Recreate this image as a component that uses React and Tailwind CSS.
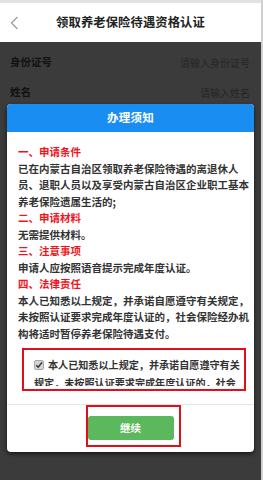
import React from "react";

const font = { fontFamily: '"Noto Sans CJK SC", "Noto Sans", sans-serif' };

function Line({ children, red }) {
  return (
    <div className={`whitespace-nowrap ${red ? "text-[#f0141e]" : "text-[#333333]"}`}>{children}</div>
  );
}

export default function App() {
  return (
    <div className="flex w-[263px] h-[480px] overflow-hidden bg-white" style={font}>
      <div className="relative w-[261px] h-[480px] flex flex-col bg-[#3b3b3b]">
        <div className="h-[3px] bg-[#e2e2e2]" />
        <div className="relative h-[39px] bg-white flex items-center justify-center">
          <svg className="absolute left-[10px] top-[13px]" width="9" height="14" viewBox="0 0 9 14">
            <polyline points="7.5,1 1.5,7 7.5,13" fill="none" stroke="#9a9a9a" strokeWidth="1.2" />
          </svg>
          <span className="text-[12.3px] font-bold text-[#222] tracking-[0.1px]">领取养老保险待遇资格认证</span>
        </div>
        <div className="pt-[5px] flex flex-col">
          <div className="h-[30px] flex items-center justify-between pl-[10px] pr-[11px]">
            <span className="text-[10.5px] font-bold text-[#111111]">身份证号</span>
            <span className="text-[10px] text-[#252525]">请输入身份证号</span>
          </div>
          <div className="h-[30px] flex items-center justify-between pl-[10px] pr-[11px]">
            <span className="text-[10.5px] font-bold text-[#111111]">姓名</span>
            <span className="text-[10px] text-[#252525]">请输入姓名</span>
          </div>
        </div>

        <div className="absolute left-[7px] top-[104px] w-[247px] bg-white rounded-[4px] shadow-[0_2px_4px_rgba(0,0,0,0.6)] flex flex-col">
          <div className="h-[28px] bg-[#1a8df2] rounded-t-[4px] flex items-center justify-center">
            <span className="text-white text-[11.5px] font-bold tracking-[0.3px]">办理须知</span>
          </div>
          <div className="pt-[12px] pl-[11px] pr-[6px] text-[10.5px] leading-[16.5px] font-bold">
            <Line red>一、申请条件</Line>
            <Line>已在内蒙古自治区领取养老保险待遇的离退休人</Line>
            <Line>员、退职人员以及享受内蒙古自治区企业职工基本</Line>
            <Line>养老保险遗属生活的;</Line>
            <Line red>二、申请材料</Line>
            <Line>无需提供材料。</Line>
            <Line red>三、注意事项</Line>
            <Line>申请人应按照语音提示完成年度认证。</Line>
            <Line red>四、法律责任</Line>
            <Line>本人已知悉以上规定，并承诺自愿遵守有关规定，</Line>
            <Line>未按照认证要求完成年度认证的，社会保险经办机</Line>
            <Line>构将适时暂停养老保险待遇支付。</Line>
          </div>
          <div className="mt-[6px] ml-[15px] mr-[8px] h-[43px] border-2 border-[#e0101a] pt-[6px] pl-[10px] pr-[1px]">
            <div className="h-[30px] overflow-hidden text-[10.1px] leading-[18px] font-bold text-[#333]">
              <div className="whitespace-nowrap flex items-center">
                <svg className="mr-[4px] shrink-0" width="10" height="10" viewBox="0 0 10 10">
                  <rect x="0.5" y="0.5" width="9" height="9" rx="1.5" fill="#d4d4d4" stroke="#a8a8a8" />
                  <polyline points="2.2,5.2 4.2,7.2 8,2.4" fill="none" stroke="#333" strokeWidth="1.5" />
                </svg>
                <span>本人已知悉以上规定，并承诺自愿遵守有关</span>
              </div>
              <div className="whitespace-nowrap">规定，未按照认证要求完成年度认证的，社会</div>
            </div>
          </div>
          <div className="mt-[13px] h-px bg-[#e6e6e6]" />
          <div className="flex justify-center pt-[11px] pb-[12px]">
            <div className="relative">
              <button className="w-[86px] h-[24px] rounded-[3px] bg-[#5cb85c] text-white text-[10.5px] font-bold flex items-center justify-center">
                继续
              </button>
              <div className="absolute -left-[2px] -right-[7px] -top-[11px] -bottom-[7px] border-2 border-[#e0101a]" />
            </div>
          </div>
        </div>
      </div>
      <div className="w-[2px] h-[480px] bg-[#d0d0d0]" />
    </div>
  );
}
